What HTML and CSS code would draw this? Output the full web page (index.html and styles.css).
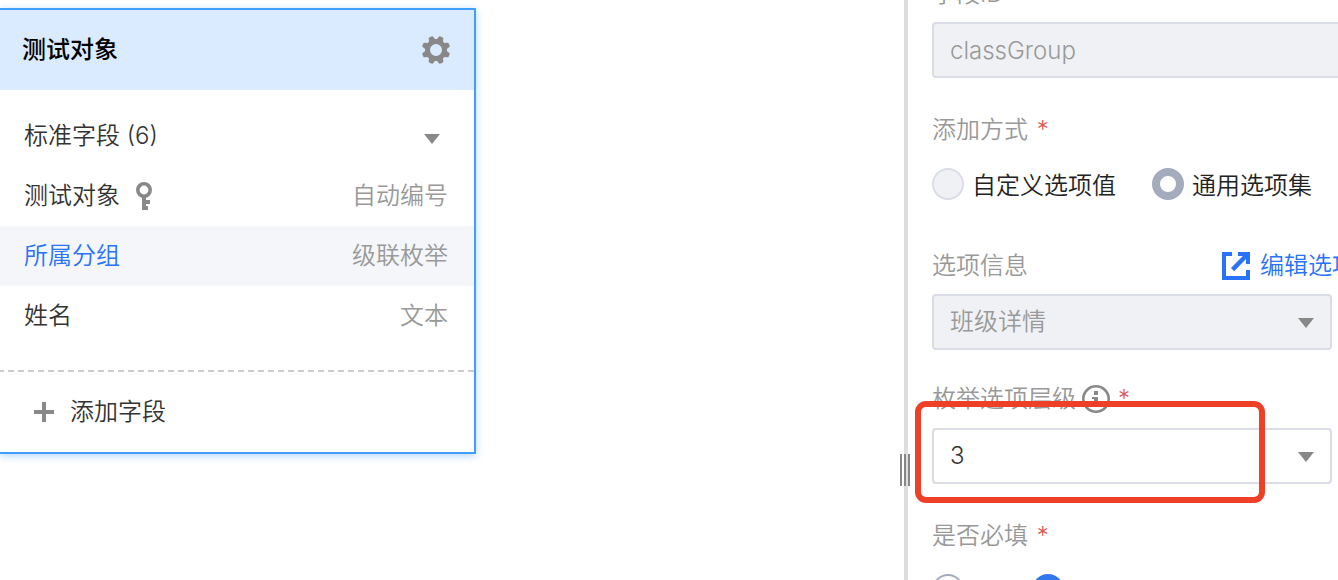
FILE: index.html
```html
<!DOCTYPE html>
<html lang="zh-CN">
<head>
    <meta charset="UTF-8">
    <meta name="viewport" content="width=device-width, initial-scale=1.0">
    <title>测试对象</title>
    <link rel="stylesheet" href="styles.css">
</head>
<body>
    <main class="canvas">
        <section class="card">
            <header class="card-header">
                <h2>测试对象</h2>
                <button class="icon-btn" type="button" aria-label="设置">
                    <svg width="28" height="28" viewBox="-14 -14 28 28">
                        <circle r="8.5" fill="none" stroke="#888" stroke-width="5"/>
                        <g fill="#888">
                            <path id="tooth" d="M-3.4-10 L-2.4-13.4 Q-2.2-14.2 -1.4-14.2 H1.4 Q2.2-14.2 2.4-13.4 L3.4-10 Z" transform="rotate(22.5)"/>
                            <use href="#tooth" transform="rotate(45)"/>
                            <use href="#tooth" transform="rotate(90)"/>
                            <use href="#tooth" transform="rotate(135)"/>
                            <use href="#tooth" transform="rotate(180)"/>
                            <use href="#tooth" transform="rotate(225)"/>
                            <use href="#tooth" transform="rotate(270)"/>
                            <use href="#tooth" transform="rotate(315)"/>
                        </g>
                    </svg>
                </button>
            </header>
            <div class="card-body">
                <div class="row">
                    <span>标准字段 (6)</span>
                    <button class="icon-btn toggle" type="button" aria-label="收起">
                        <svg width="16" height="10" viewBox="0 0 16 10"><path d="M0 0H16L8 10Z" fill="#888"/></svg>
                    </button>
                </div>
                <div class="row">
                    <span class="name">测试对象
                        <svg width="16" height="28" viewBox="0 0 16 28" fill="#888">
                            <circle cx="8" cy="8" r="6.2" fill="none" stroke="#888" stroke-width="3.6"/>
                            <path d="M6 15H10V18H14V22H10V24H12V28H6Z"/>
                        </svg>
                    </span>
                    <span class="type">自动编号</span>
                </div>
                <div class="row active">
                    <span>所属分组</span>
                    <span class="type">级联枚举</span>
                </div>
                <div class="row">
                    <span>姓名</span>
                    <span class="type">文本</span>
                </div>
            </div>
            <div class="divider"></div>
            <button class="add-field" type="button">
                <svg width="20" height="20" viewBox="0 0 20 20"><path d="M8 0H12V8H20V12H12V20H8V12H0V8H8Z" fill="#888"/></svg>
                添加字段
            </button>
        </section>
    </main>

    <aside class="panel">
        <div class="splitter"></div>
        <form class="form">
            <div class="field">
                <label class="label" for="fieldId">字段ID</label>
                <input class="control control-wide" id="fieldId" type="text" value="classGroup" disabled>
            </div>

            <div class="field">
                <div class="label" id="modeLabel">添加方式 <span class="required">*</span></div>
                <div class="radios modes" role="radiogroup" aria-labelledby="modeLabel">
                    <label><input type="radio" name="mode" disabled>自定义选项值</label>
                    <label><input type="radio" name="mode" checked disabled>通用选项集</label>
                </div>
            </div>

            <div class="field">
                <div class="label label-link">
                    <label for="optionSet">选项信息</label>
                    <a href="#">
                        <svg width="28" height="28" viewBox="0 0 28 28">
                            <path d="M10 0V4H4V24H24V18H28V28H0V0Z" fill="#2972fa"/>
                            <path d="M16 0H28V12H24V7L12.2 19.2L9 16L20.8 4H16Z" fill="#2972fa"/>
                        </svg>
                        编辑选项
                    </a>
                </div>
                <div class="select">
                    <select class="control" id="optionSet" disabled>
                        <option>班级详情</option>
                    </select>
                    <svg width="16" height="10" viewBox="0 0 16 10"><path d="M0 0H16L8 10Z" fill="#888"/></svg>
                </div>
            </div>

            <div class="field">
                <label class="label label-info" for="level">枚举选项层级
                    <svg width="28" height="28" viewBox="0 0 28 28">
                        <circle cx="14" cy="14" r="12.7" fill="none" stroke="#888" stroke-width="2.6"/>
                        <path d="M12 6H16V10H12ZM10 12H16V19H18V21H10V19H12V14H10Z" fill="#888"/>
                    </svg>
                    <span class="required">*</span>
                </label>
                <div class="select">
                    <select class="control" id="level">
                        <option>3</option>
                    </select>
                    <svg width="16" height="10" viewBox="0 0 16 10"><path d="M0 0H16L8 10Z" fill="#888"/></svg>
                    <div class="highlight"></div>
                </div>
            </div>

            <div class="field">
                <div class="label" id="requiredLabel">是否必填 <span class="required">*</span></div>
                <div class="radios" role="radiogroup" aria-labelledby="requiredLabel">
                    <label><input type="radio" name="required">是</label>
                    <label><input type="radio" name="required" checked>否</label>
                </div>
            </div>
        </form>
    </aside>
</body>
</html>
```

FILE: styles.css
```css
* {
    box-sizing: border-box;
}
body {
    margin: 0;
    height: 100vh;
    display: flex;
    overflow: hidden;
    background: #fff;
    color: #333;
    font-family: Inter, "Noto Sans CJK SC", sans-serif;
    font-size: 24px;
    font-weight: 350;
    line-height: 36px;
}
button, input, select {
    font: inherit;
    color: inherit;
    margin: 0;
}
svg {
    display: block;
    flex: none;
}

/* object card */
.canvas {
    flex: 1;
    padding-top: 8px;
}
.card {
    width: 476px;
    border: 2px solid #409eff;
    border-left: 0;
    box-shadow: 0 2px 8px rgba(64, 158, 255, 0.4);
}
.card-header {
    display: flex;
    align-items: center;
    justify-content: space-between;
    height: 80px;
    padding: 0 24px 0 22px;
    background: #daebff;
}
.card-header h2 {
    margin: 0;
    color: #000;
    font-size: 24px;
    font-weight: 500;
}
.icon-btn {
    padding: 0;
    border: 0;
    background: none;
    cursor: pointer;
}
.card-body {
    padding: 16px 0 24px;
}
.row {
    display: flex;
    align-items: center;
    justify-content: space-between;
    height: 60px;
    padding: 0 26px 0 24px;
}
.row.active {
    background: #f5f6fa;
    color: #2972fa;
}
.name {
    display: flex;
    align-items: center;
    gap: 16px;
}
.toggle {
    padding: 6px 8px 0;
}
.row .type {
    color: #999;
}
.divider {
    height: 2px;
    background: repeating-linear-gradient(to right, #ccc 0 4px, transparent 4px 8px, #ccc 8px 10px);
}
.add-field {
    display: flex;
    align-items: center;
    gap: 16px;
    width: 100%;
    height: 80px;
    padding: 0 34px;
    border: 0;
    background: none;
    cursor: pointer;
}

/* property panel */
.panel {
    position: relative;
    flex: 0 0 434px;
    min-width: 0;
    padding-left: 24px;
    border-left: 4px solid #ddd;
}
.splitter {
    position: absolute;
    top: 454px;
    left: -8px;
    width: 10px;
    height: 32px;
    background: repeating-linear-gradient(to right, #888 0 2px, transparent 2px 4px);
    cursor: col-resize;
}
.form {
    margin-top: -24px;
}
.field {
    margin-bottom: 34px;
}
.label {
    display: block;
    height: 36px;
    margin-bottom: 10px;
    color: #999;
    white-space: nowrap;
}
.required {
    margin-left: 2px;
    color: #e05555;
}
.label-link {
    display: grid;
    grid-template-columns: 290px auto;
}
.label-link a {
    display: flex;
    align-items: center;
    gap: 10px;
    color: #2972fa;
    text-decoration: none;
}
.label-info {
    display: flex;
    align-items: center;
    gap: 6px;
    height: 34px;
    padding-bottom: 4px;
}
.control {
    display: block;
    width: 100%;
    height: 56px;
    padding: 0 16px;
    border: 2px solid #dadde6;
    border-radius: 4px;
    background: #fff;
    appearance: none;
}
.control:disabled {
    background: #f0f1f5;
    color: #999;
    opacity: 1;
}
.control-wide {
    border-right: 0;
    border-radius: 4px 0 0 4px;
}
.select {
    position: relative;
    margin-right: 6px;
}
.select svg {
    position: absolute;
    top: 24px;
    right: 18px;
    pointer-events: none;
}
.highlight {
    position: absolute;
    top: -27px;
    left: -17px;
    right: 67px;
    height: 102px;
    border: 6px solid #ee4026;
    border-radius: 11px;
    pointer-events: none;
}
.radios {
    display: flex;
    gap: 36px;
    padding: 10px 0;
}
.radios label {
    display: flex;
    align-items: flex-start;
    gap: 8px;
    white-space: nowrap;
}
.modes {
    color: #222;
}
.radios input {
    flex: none;
    width: 32px;
    height: 32px;
    border: 2px solid #a4abbd;
    border-radius: 50%;
    background: #fff;
    appearance: none;
}
.radios input:checked {
    border: 8px solid #3377ee;
}
.radios input:disabled {
    border-color: #dadde6;
    background: #f0f1f5;
}
.radios input:checked:disabled {
    border-color: #a4abbd;
    background: #fff;
}
```
